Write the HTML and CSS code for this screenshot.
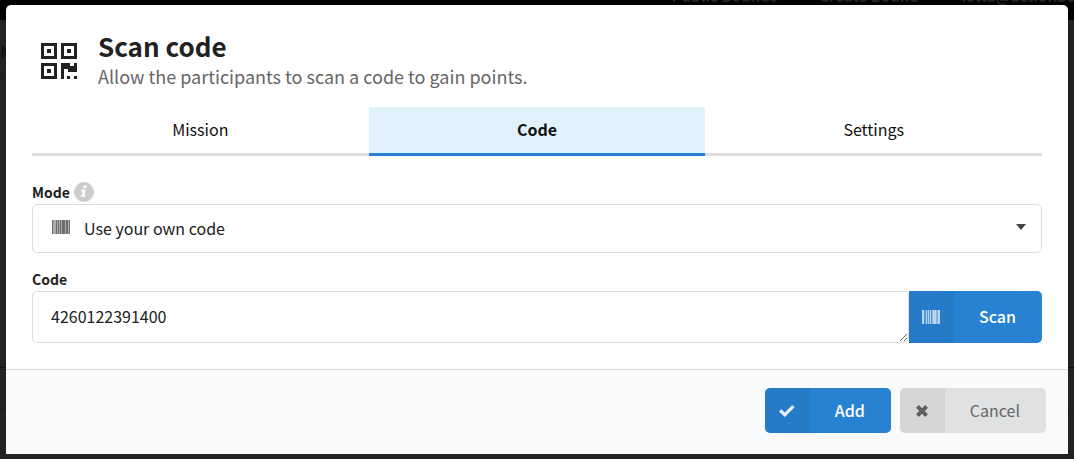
FILE: index.html
```html
<!DOCTYPE html>
<html lang="en">
<head>
    <meta charset="UTF-8">
    <meta name="viewport" content="width=device-width, initial-scale=1.0">
    <link rel="stylesheet" href="styles.css">
    <title>Scan code</title>
</head>
<body>
    <!-- dimmed page behind the dialog -->
    <div class="page" aria-hidden="true">
        <div class="page-nav">
            <span>Public Bounds</span>
            <span>Create Bound</span>
            <span>lotta@actionbound.com</span>
        </div>
        <div class="page-title">My Bound</div>
        <div class="page-row"></div>
        <div class="page-row page-row-last"></div>
    </div>

    <form class="modal" role="dialog" aria-labelledby="modal-title">
        <header class="modal-header">
            <svg class="qr-icon" viewBox="0 0 36 36" aria-hidden="true">
                <path fill-rule="evenodd" d="M0 0h16v16H0zM3 3v10h10V3zM6 6h4v4H6zM20 0h16v16H20zM23 3v10h10V3zM26 6h4v4h-4zM0 20h16v16H0zM3 23v10h10V23zM6 26h4v4H6z"/>
                <path d="M20 20h9v3h4v-3h3v9h-9v-3h-4v10h-3zM26 33h3v3h-3zM33 33h3v3h-3z"/>
            </svg>
            <div>
                <h1 id="modal-title">Scan code</h1>
                <p>Allow the participants to scan a code to gain points.</p>
            </div>
        </header>

        <nav class="tabs">
            <a class="tab" href="#mission">Mission</a>
            <a class="tab active" href="#code">Code</a>
            <a class="tab" href="#settings">Settings</a>
        </nav>

        <div class="fields">
            <div class="field">
                <div class="field-label">
                    <label for="mode">Mode</label>
                    <svg class="info-icon" viewBox="0 0 20 20" aria-hidden="true">
                        <circle cx="10" cy="10" r="10"/>
                        <path d="M9.800 3.500h3l-.6 2.500h-3zM7.400 7.600h4.300l-1.400 5.600h1.300l-.3 1.600H6.600l.3-1.500h.9l1-4H7z"/>
                    </svg>
                </div>
                <div class="select-box">
                    <svg class="barcode-icon" viewBox="0 0 18 14" aria-hidden="true">
                        <path opacity=".45" d="M0 0h18v14H0z"/>
                        <path opacity=".6" d="M0 0h1v14H0zM4 0h1v14H4zM6 0h1v14H6zM8 0h1v14H8zM10 0h3v14h-3zM14 0h2v14h-2zM17 0h1v14h-1z"/>
                    </svg>
                    <select id="mode" name="mode">
                        <option value="own">Use your own code</option>
                        <option value="generate">Generate a code</option>
                    </select>
                    <svg class="caret-icon" viewBox="0 0 10 6" aria-hidden="true">
                        <path d="M0 0h10L5 6z"/>
                    </svg>
                </div>
            </div>

            <div class="field">
                <div class="field-label">
                    <label for="code">Code</label>
                </div>
                <div class="input-group">
                    <textarea id="code" name="code" rows="1">4260122391400</textarea>
                    <button type="button" class="btn btn-primary btn-scan">
                        <span class="btn-icon">
                            <svg class="barcode-icon" viewBox="0 0 18 14" aria-hidden="true">
                                <path opacity=".25" d="M0 0h18v14H0z"/>
                                <path opacity=".8" d="M0 0h2v14H0zM4 0h1v14H4zM6 0h1v14H6zM8 0h1v14H8zM10.500 0h4v14h-4zM15.500 0H18v14h-2.500z"/>
                            </svg>
                        </span>
                        <span class="btn-text">Scan</span>
                    </button>
                </div>
            </div>
        </div>

        <footer class="modal-footer">
            <button type="button" class="btn btn-primary">
                <span class="btn-icon">
                    <svg class="check-icon" viewBox="0 0 16 12" aria-hidden="true">
                        <path d="M0 6.500l2.300-2.300 3.500 3.300L13.300 0 15.600 2.300 5.900 12z"/>
                    </svg>
                </span>
                <span class="btn-text">Add</span>
            </button>
            <button type="button" class="btn btn-default">
                <span class="btn-icon">
                    <svg class="times-icon" viewBox="0 0 12 12" aria-hidden="true">
                        <path d="M2.800 0L6 3.200 9.200 0 12 2.800 8.800 6 12 9.200 9.200 12 6 8.800 2.800 12 0 9.200 3.200 6 0 2.800z"/>
                    </svg>
                </span>
                <span class="btn-text">Cancel</span>
            </button>
        </footer>
    </form>
</body>
</html>
```
FILE: styles.css
```css
* {
    box-sizing: border-box;
}

body {
    margin: 0;
    padding: 5px 6px;
    background-color: #222;
    color: #212121;
    font-family: "Noto Sans CJK SC", "Open Sans", sans-serif;
    font-size: 16px;
    line-height: 24px;
}

h1, p {
    margin: 0;
}

/* page behind */
.page {
    position: absolute;
    top: 0;
    left: 0;
    right: 0;
    bottom: 0;
    overflow: hidden;
}

.page-nav {
    display: flex;
    justify-content: flex-end;
    gap: 42px;
    height: 20px;
    margin-right: -67px;
    background-color: #000;
    color: #262626;
    font-size: 15px;
    line-height: 0;
    white-space: nowrap;
    font-weight: bold;
}

.page-nav span {
    margin-top: -4px;
}

.page-title {
    padding: 18px 0 14px;
    line-height: 26px;
    font-weight: bold;
    color: #111;
    border-bottom: 1px solid #1c1c1c;
}

.page-row {
    height: 289px;
    border-bottom: 1px solid #0b1016;
}

.page-row-last {
    height: 42px;
    border-color: #1a1a1a;
}

/* dialog */
.modal {
    position: relative;
    background-color: #fff;
    border-radius: 5px 5px 0 0;
    overflow: hidden;
}

.modal-header {
    display: flex;
    align-items: center;
    gap: 21px;
    padding: 25px 35px 17px;
}

.qr-icon {
    width: 36px;
    height: 36px;
    margin-top: 2px;
    fill: #212121;
}

.modal-header h1 {
    font-size: 26px;
    line-height: 32px;
}

.modal-header p {
    font-size: 18px;
    line-height: 28px;
    color: #666;
}

.tabs {
    display: flex;
    margin: 0 26px;
}

.tab {
    flex: 1;
    padding: 10px 0 12px;
    border-bottom: 3px solid #ddd;
    color: #111;
    text-align: center;
    text-decoration: none;
}

.tab.active {
    border-color: #2782d3;
    background-color: #e1f2fc;
    font-weight: bold;
}

.fields {
    padding: 24px 26px 26px;
}

.field + .field {
    margin-top: 14px;
}

.field-label {
    display: flex;
    align-items: center;
    gap: 4px;
    height: 24px;
    font-size: 14px;
    font-weight: bold;
}

.info-icon {
    width: 20px;
    height: 20px;
}

.info-icon circle {
    fill: #ccc;
}

.info-icon path {
    fill: #fff;
}

.select-box {
    position: relative;
}

.select-box select {
    display: block;
    width: 100%;
    height: 49px;
    padding: 0 50px 2px 51px;
    appearance: none;
    border: 1px solid #ddd;
    border-radius: 5px;
    background-color: #fff;
    color: #212121;
    font: inherit;
}

.barcode-icon {
    width: 18px;
    height: 14px;
    fill: #444;
}

.select-box .barcode-icon {
    position: absolute;
    left: 20px;
    top: 16px;
}

.caret-icon {
    position: absolute;
    right: 16px;
    top: 20px;
    width: 10px;
    height: 6px;
    fill: #444;
}

.input-group {
    display: flex;
}

.input-group textarea {
    flex: 1;
    height: 52px;
    padding: 12px 18px;
    border: 1px solid #ddd;
    border-radius: 5px;
    background-color: #fff;
    color: #212121;
    font: inherit;
    resize: vertical;
}

/* buttons */
.btn {
    display: flex;
    height: 45px;
    padding: 0;
    border: 0;
    border-radius: 5px;
    overflow: hidden;
    font: inherit;
    cursor: pointer;
}

.btn-icon {
    display: flex;
    align-items: center;
    justify-content: center;
    width: 45px;
    height: 100%;
    background-color: rgba(0, 0, 0, 0.05);
}

.btn-text {
    align-self: center;
    padding: 0 26px 2px 25px;
}

.btn-primary {
    background-color: #2782d3;
    color: #fff;
    font-weight: 500;
}

.btn-default {
    background-color: #e0e1e2;
    color: #666;
}

.btn-scan {
    height: 52px;
    border-radius: 0 5px 5px 0;
}

.btn-scan .barcode-icon {
    fill: #d3e5f6;
}

.check-icon {
    width: 16px;
    height: 12px;
    fill: #e9f2fb;
}

.times-icon {
    width: 12px;
    height: 12px;
    fill: #5f5f5f;
}

.modal-footer {
    display: flex;
    justify-content: flex-end;
    gap: 9px;
    padding: 18px 22px 21px;
    border-top: 1px solid #d8d9da;
    background-color: #f9fafb;
}
```
